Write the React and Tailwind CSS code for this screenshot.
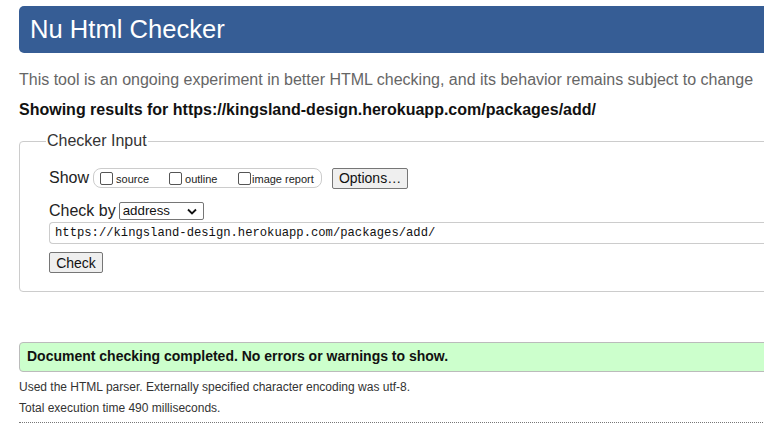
export default function App() {
  return (
    <div className="w-[764px] h-[424px] overflow-hidden bg-white" style={{ fontFamily: '"Liberation Sans", Arial, sans-serif' }}>
      <div className="ml-[19px] w-[820px] pt-[6px]">
        <div className="h-[47px] bg-[#365d95] rounded-l-[5px] flex items-center pl-[11px]">
          <h1 className="text-white text-[25.6px] leading-none">Nu Html Checker</h1>
        </div>
        <p className="mt-[17px] text-[16px] leading-[20px] text-[#666]">This tool is an ongoing experiment in better HTML checking, and its behavior remains subject to change</p>
        <p className="mt-[10px] text-[16px] leading-[20px] font-bold text-[#111]">Showing results for https://kingsland-design.herokuapp.com/packages/add/</p>
        <fieldset className="mt-[12px] border border-[#ccc] rounded-[4px] pl-[29px] pb-[16px] pt-[6px]">
          <legend className="-ml-[3px] px-[1px] text-[16px] leading-[18px] text-[#333]">Checker Input</legend>
          <div className="flex items-center h-[24px] mt-[10px]">
            <span className="text-[16px] text-[#222] mr-[4px]">Show</span>
            <div className="flex items-center h-[20px] w-[229px] border border-[#ccc] rounded-[8px] pl-[6px] text-[11px] text-[#222]">
              <span className="w-[13px] h-[13px] border border-[#555] rounded-[2px] mr-[3px]"></span>
              <span className="w-[53px] mt-[2px]">source</span>
              <span className="w-[13px] h-[13px] border border-[#555] rounded-[2px] mr-[3px]"></span>
              <span className="w-[53px] mt-[2px]">outline</span>
              <span className="w-[13px] h-[13px] border border-[#555] rounded-[2px] mr-[1px]"></span>
              <span className="mt-[2px]">image report</span>
            </div>
            <button className="ml-[10px] h-[21px] w-[76px] border border-[#767676] rounded-[2px] bg-[#efefef] text-[14px] text-[#111] leading-none">Options…</button>
          </div>
          <div className="flex items-center h-[22px] mt-[10px]">
            <span className="text-[16px] text-[#222] mr-[3px]">Check by</span>
            <div className="h-[18px] w-[85px] border border-[#767676] rounded-[2px] flex items-center justify-between pl-[3px] pr-[6px] text-[13.3px] text-[#111]">
              <span>address</span>
              <svg width="10" height="7" viewBox="0 0 10 7"><path d="M1 1.5 L5 5.5 L9 1.5" fill="none" stroke="#111" strokeWidth="1.8" /></svg>
            </div>
          </div>
          <div className="h-[22px] border border-[#ccc] border-r-0 rounded-l-[4px] flex items-center pl-[5px] text-[12.2px] text-[#111]" style={{ fontFamily: '"Liberation Mono", "DejaVu Sans Mono", monospace' }}>
            https://kingsland-design.herokuapp.com/packages/add/
          </div>
          <button className="mt-[8px] h-[21px] w-[54px] border border-[#767676] rounded-[2px] bg-[#efefef] text-[14px] text-[#111] leading-none">Check</button>
        </fieldset>
        <div className="mt-[50px] h-[30px] bg-[#ccffcc] border border-[#bbb] rounded-l-[4px] flex items-center pl-[7px]">
          <span className="text-[14px] font-bold text-[#111]">Document checking completed. No errors or warnings to show.</span>
        </div>
        <p className="mt-[5px] text-[12px] leading-[20px] text-[#333]">Used the HTML parser. Externally specified character encoding was utf-8.</p>
        <p className="mt-[1px] text-[12px] leading-[20px] text-[#333]">Total execution time 490 milliseconds.</p>
        <div className="mt-[4px] border-t border-dotted border-[#777]"></div>
      </div>
    </div>
  );
}
